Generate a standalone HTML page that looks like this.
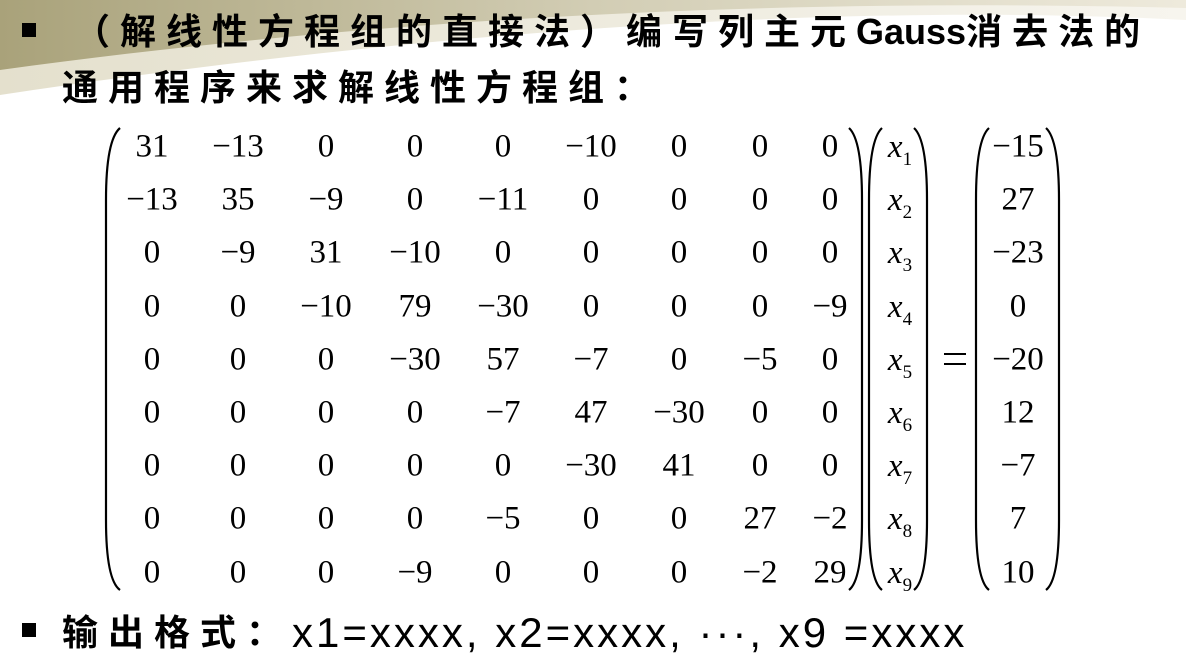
<!DOCTYPE html>
<html><head><meta charset="utf-8"><style>
body{margin:0;width:1186px;height:672px;overflow:hidden;background:#fff;position:relative;font-family:"Liberation Serif",serif}
.t{position:absolute;font-family:"Liberation Sans","Noto Sans CJK SC",sans-serif;font-weight:bold;font-size:36px;letter-spacing:10px;white-space:nowrap;color:#000;line-height:1}
.b{position:absolute;width:14px;height:14px;background:#000}
.n{position:absolute;font-size:33px;transform:translate(-50%,-50%);white-space:nowrap;line-height:1}
.x{position:absolute;font-size:33px;font-style:italic;transform:translate(-50%,-50%);line-height:1}
.x sub{font-style:normal;font-size:19px;vertical-align:-8px}
</style></head><body>
<svg width="1186" height="672" style="position:absolute;left:0;top:0">
<defs><linearGradient id="g" x1="0" x2="1" y1="0" y2="0"><stop offset="0" stop-color="#a9a27a"/><stop offset="0.5" stop-color="#d2cdb4"/><stop offset="1" stop-color="#eeeadc"/></linearGradient>
<linearGradient id="g2" x1="0" x2="1"><stop offset="0" stop-color="#e4e0cd"/><stop offset="1" stop-color="#f7f5ee"/></linearGradient></defs>
<path d="M0 0H1186V20C900 5 500 20 0 95Z" fill="url(#g2)"/>
<path d="M0 0H1186V8C800 -2 400 15 0 70Z" fill="url(#g)"/>
<g fill="none" stroke="#000" stroke-width="2.2">
<path d="M120 128Q106 140 106 200V520Q106 580 120 590"/>
<path d="M849 128Q862 140 862 200V520Q862 580 849 590"/>
<path d="M882 128Q869 140 869 200V520Q869 580 882 590"/>
<path d="M914 128Q927 140 927 200V520Q927 580 914 590"/>
<path d="M989 128Q976 140 976 200V520Q976 580 989 590"/>
<path d="M1046 128Q1059 140 1059 200V520Q1059 580 1046 590"/>
</g>
<g stroke="#000" stroke-width="2"><line x1="944" y1="354" x2="966" y2="354"/><line x1="944" y1="364" x2="966" y2="364"/></g>
</svg>
<div class="b" style="left:22px;top:23px"></div>
<div class="t" style="left:74px;top:14px">（解线性方程组的直接法）编写列主元<span style="letter-spacing:0">Gauss</span>消去法的</div>
<div class="t" style="left:62px;top:70px">通用程序来求解线性方程组：</div>
<div class="b" style="left:22px;top:623px"></div>
<div class="t" style="left:62px;top:612px">输出格式：<span style="font-weight:normal;letter-spacing:3px;font-size:42px;vertical-align:-2px">x1=xxxx, x2=xxxx, ···, x9 =xxxx</span></div>
<div id="m"></div>
<script>
var M=[[31,-13,0,0,0,-10,0,0,0],[-13,35,-9,0,-11,0,0,0,0],[0,-9,31,-10,0,0,0,0,0],[0,0,-10,79,-30,0,0,0,-9],[0,0,0,-30,57,-7,0,-5,0],[0,0,0,0,-7,47,-30,0,0],[0,0,0,0,0,-30,41,0,0],[0,0,0,0,-5,0,0,27,-2],[0,0,0,-9,0,0,0,-2,29]];
var C=[152,238,326,415,503,591,679,760,830],R=[-15,27,-23,0,-20,12,-7,7,10],h="";
for(var i=0;i<9;i++){var y=147+i*53.2;
for(var j=0;j<9;j++)h+='<div class="n" style="left:'+C[j]+'px;top:'+y+'px">'+String(M[i][j]).replace('-','\u2212')+'</div>';
h+='<div class="x" style="left:900px;top:'+(y+3)+'px">x<sub>'+(i+1)+'</sub></div>';
h+='<div class="n" style="left:1018px;top:'+y+'px">'+String(R[i]).replace('-','\u2212')+'</div>';}
document.getElementById('m').innerHTML=h;
</script>
</body></html>
